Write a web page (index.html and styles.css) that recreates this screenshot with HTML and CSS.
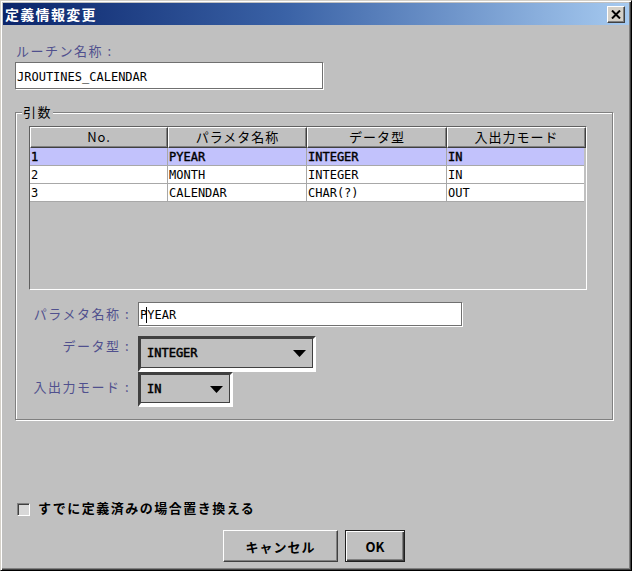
FILE: index.html
```html
<!DOCTYPE html>
<html lang="ja">
<head>
<meta charset="utf-8">
<title>定義情報変更</title>
<link rel="stylesheet" href="styles.css">
</head>
<body>
<div class="window">
  <div class="titlebar">
    <span class="title">定義情報変更</span>
    <span class="close-btn">
      <svg width="10" height="9" viewBox="0 0 10 9"><path d="M1 0.5 L9 8.5 M9 0.5 L1 8.5" stroke="#000" stroke-width="2" fill="none"/></svg>
    </span>
  </div>
  <div class="content">
    <div class="label routine-label">ルーチン名称 :</div>
    <div class="textbox routine-box">JROUTINES_CALENDAR</div>

    <fieldset class="group">
      <legend class="group-legend">引数</legend>
      <div class="table">
        <div class="thead">
          <div class="th">No.</div>
          <div class="th">パラメタ名称</div>
          <div class="th">データ型</div>
          <div class="th">入出力モード</div>
        </div>
        <div class="tr selected">
          <div class="td">1</div><div class="td">PYEAR</div><div class="td">INTEGER</div><div class="td">IN</div>
        </div>
        <div class="tr">
          <div class="td">2</div><div class="td">MONTH</div><div class="td">INTEGER</div><div class="td">IN</div>
        </div>
        <div class="tr">
          <div class="td">3</div><div class="td">CALENDAR</div><div class="td">CHAR(?)</div><div class="td">OUT</div>
        </div>
      </div>

      <div class="form">
        <div class="flabel label">パラメタ名称 :</div>
        <div class="textbox param-box">P<span class="caret"></span>YEAR</div>

        <div class="flabel label combo-label">データ型 :</div>
        <div class="combo combo-type">
          <div class="combo-inner">
            <span class="combo-text">INTEGER</span>
            <svg class="arrow" width="13" height="7" viewBox="0 0 13 7"><polygon points="0,0 13,0 6.5,7" fill="#000"/></svg>
          </div>
        </div>

        <div class="flabel label combo-label">入出力モード :</div>
        <div class="combo combo-mode">
          <div class="combo-inner">
            <span class="combo-text">IN</span>
            <svg class="arrow" width="13" height="7" viewBox="0 0 13 7"><polygon points="0,0 13,0 6.5,7" fill="#000"/></svg>
          </div>
        </div>
      </div>
    </fieldset>

    <div class="check-row">
      <span class="checkbox"></span>
      <span class="check-text">すでに定義済みの場合置き換える</span>
    </div>

    <div class="buttons">
      <div class="btn btn-cancel">キャンセル</div>
      <div class="btn btn-ok">OK</div>
    </div>
  </div>
</div>
</body>
</html>
```

FILE: styles.css
```css
* { box-sizing: border-box; }

html, body {
  margin: 0;
  padding: 0;
  background: #c0c0c0;
}

body {
  font-family: "Noto Sans CJK JP", "Noto Sans", sans-serif;
  font-size: 13px;
  color: #000;
}

.window {
  width: 632px;
  height: 571px;
  background: #c0c0c0;
  border: 1px solid;
  border-color: #d4d0c8 #000 #000 #d4d0c8;
  padding: 2px;
  box-shadow: inset 1px 1px 0 #fff, inset -1px -1px 0 #404040, inset -2px -2px 0 #808080;
  display: flex;
  flex-direction: column;
}

.titlebar {
  height: 22px;
  flex: 0 0 22px;
  background: linear-gradient(to right, #0a246a 0%, #3a62a6 45%, #a6caf0 100%);
  display: flex;
  align-items: center;
  justify-content: space-between;
  padding: 0 4px 0 2px;
}

.title {
  color: #fff;
  font-weight: bold;
  font-size: 14px;
  letter-spacing: 1.3px;
  line-height: 16px;
}

.close-btn {
  width: 18px;
  height: 17px;
  background: #d4d0c8;
  border: 1px solid;
  border-color: #fff #404040 #404040 #fff;
  box-shadow: inset -1px -1px 0 #808080;
  display: flex;
  align-items: center;
  justify-content: center;
  margin-top: 1px;
}

.content {
  flex: 1;
  padding: 18px 16px 0 12px;
  display: flex;
  flex-direction: column;
}

.label {
  color: #50508e;
  font-size: 13px;
  line-height: 16px;
  letter-spacing: 1.5px;
  white-space: nowrap;
}

.routine-label {
  padding-left: 1px;
}

.textbox {
  background: #fff;
  border: 1px solid #707070;
  box-shadow: 1px 1px 0 #fff;
  font-family: "DejaVu Sans Mono", "Liberation Mono", monospace;
  font-size: 12px;
  display: flex;
  align-items: center;
  padding: 2px 0 0 1px;
  color: #000;
}

.routine-box {
  width: 308px;
  height: 27px;
  margin-top: 3px;
}

.group {
  margin: 15px 0 0 0;
  width: 598px;
  border: 1px solid #808080;
  box-shadow: 1px 1px 0 #fff, inset 1px 1px 0 #fff;
  padding: 6px 12px 12px 13px;
  min-width: 0;
}

.group-legend {
  font-size: 13px;
  line-height: 16px;
  letter-spacing: 1.5px;
  color: #000;
  padding: 0 1px;
  margin-left: -7px;
  background: #c0c0c0;
}

.table {
  width: 558px;
  height: 164px;
  border: 1px solid;
  border-color: #606060 #fff #fff #606060;
  background: #c0c0c0;
}

.thead {
  display: grid;
  grid-template-columns: 138px 139px 140px 1fr;
  height: 21px;
}

.th {
  border: 1px solid;
  border-color: #fff #404040 #404040 #fff;
  box-shadow: inset -1px -1px 0 #808080;
  text-align: center;
  line-height: 18px;
  font-size: 13px;
  letter-spacing: 1px;
  color: #000;
}

.tr {
  display: grid;
  grid-template-columns: 138px 139px 140px 1fr;
  height: 18px;
  background: #fff;
  border-bottom: 1px solid #a8a8a8;
  margin-right: 2px;
}

.tr.selected {
  background: #c2c2fc;
}

.td {
  border-right: 1px solid #a8a8a8;
  font-family: "DejaVu Sans Mono", "Liberation Mono", monospace;
  font-size: 12px;
  line-height: 18px;
  padding-left: 1px;
  white-space: nowrap;
  overflow: hidden;
}

.td:last-child {
  border-right: none;
}

.tr.selected .td {
  -webkit-text-stroke: 0.4px #000;
}

.form {
  display: grid;
  grid-template-columns: 101px auto;
  column-gap: 8px;
  justify-content: start;
  align-items: center;
  margin-top: 12px;
}

.flabel {
  text-align: right;
  letter-spacing: 1.5px;
}

.combo-label {
  margin-bottom: 6px;
}

.param-box {
  width: 324px;
  height: 24px;
}

.caret {
  display: inline-block;
  width: 1px;
  height: 16px;
  background: #000;
  margin: 0 -1px 0 0;
  position: relative;
  left: -1px;
}

.combo {
  border-style: solid;
  border-width: 3px 3px 4px 3px;
  border-color: #404040 #fff #fff #404040;
  background: #c0c0c0;
}

.combo-type {
  width: 178px;
  height: 36px;
  margin-top: 10px;
}

.combo-mode {
  width: 95px;
  height: 35px;
}

.combo-inner {
  height: 100%;
  border-right: 1px solid #404040;
  border-bottom: 1px solid #404040;
  display: flex;
  align-items: center;
  justify-content: space-between;
  padding: 0 6px 0 6px;
}

.combo-text {
  font-family: "DejaVu Sans Mono", "Liberation Mono", monospace;
  font-size: 12px;
  -webkit-text-stroke: 0.5px #000;
}

.arrow {
  display: block;
  margin-top: 1px;
}

.check-row {
  display: flex;
  align-items: flex-start;
  margin-top: 80px;
  padding-left: 2px;
  height: 16px;
}

.checkbox {
  width: 13px;
  height: 13px;
  margin-top: 3px;
  background: #d8d8d8;
  border: 1px solid;
  border-color: #808080 #fff #fff #808080;
  box-shadow: inset 1px 1px 0 #404040;
}

.check-text {
  margin-left: 8px;
  font-size: 13px;
  line-height: 16px;
  font-weight: bold;
  letter-spacing: 1.5px;
  color: #000;
}

.buttons {
  display: flex;
  justify-content: center;
  gap: 7px;
  margin-top: 14px;
}

.btn {
  height: 32px;
  display: flex;
  align-items: center;
  justify-content: center;
  font-weight: bold;
  font-size: 13px;
  color: #000;
  background: #c0c0c0;
}

.btn-cancel {
  width: 115px;
  border: 1px solid;
  border-color: #fff #404040 #404040 #fff;
  box-shadow: inset -1px -1px 0 #808080;
  letter-spacing: 1px;
}

.btn-ok {
  width: 60px;
  border: 1px solid #202020;
  box-shadow: inset 1px 1px 0 #fff, inset -1px -1px 0 #404040, inset -2px -2px 0 #808080;
}
```
